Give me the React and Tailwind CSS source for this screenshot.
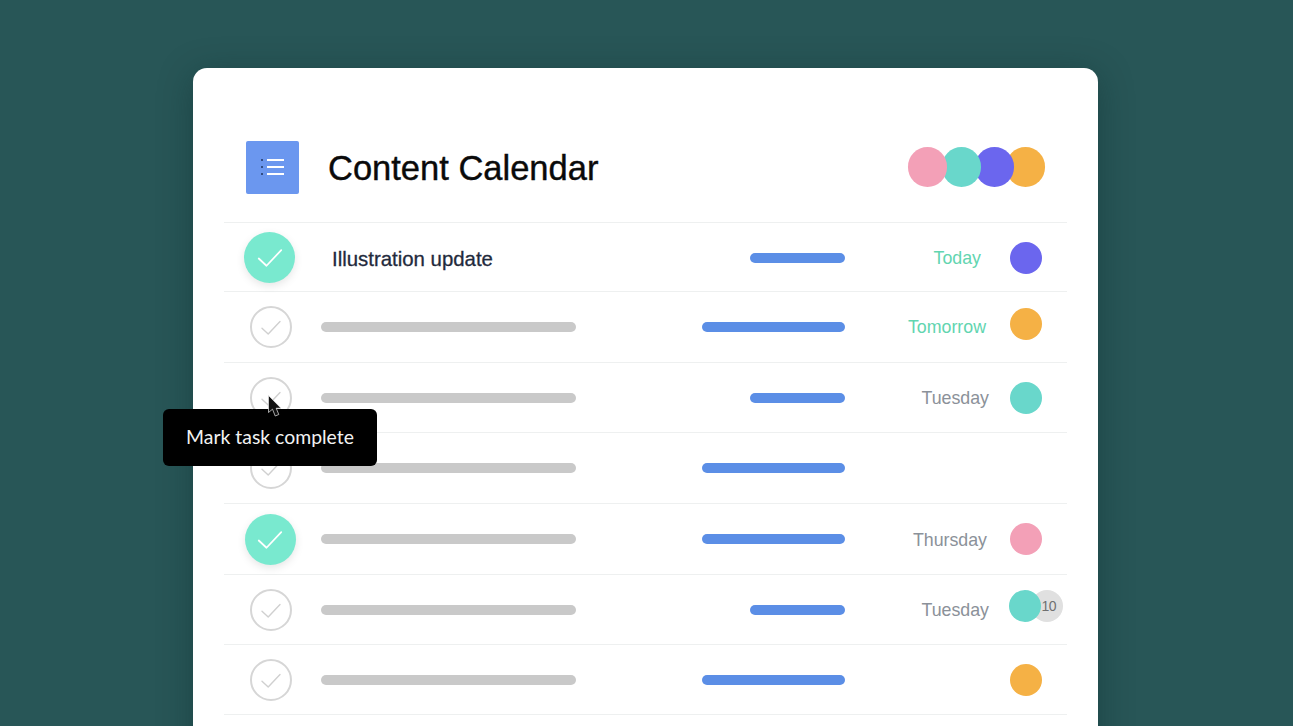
import React from 'react';

const Check = ({ className }) => (
  <svg viewBox="0 0 24 24" fill="none" strokeLinecap="round" strokeLinejoin="round" className={className}>
    <path d="M3 13.2 L9.2 19 L21 6.5" stroke="currentColor" strokeWidth="1.4" />
  </svg>
);

const rows = [
  { h: 'h-[69px]', done: true, title: 'Illustration update', blue: 'w-[95px] mt-[2px]', date: 'Today', dateCls: 'text-[#62d5b0] pr-[29px] mt-[3px]', dot: 'bg-[#6b66ee] mt-[2px]' },
  { h: 'h-[71px]', blue: 'w-[143px]', date: 'Tomorrow', dateCls: 'text-[#62d5b0] pr-[24px] mt-[2px]', dot: 'bg-[#f5b145] mb-[7px]' },
  { h: 'h-[70px]', blue: 'w-[95px]', date: 'Tuesday', dateCls: 'text-[#8b9199] pr-[21px] mt-[2px]', dot: 'bg-[#69d7cb]' },
  { h: 'h-[71px]', blue: 'w-[143px]' },
  { h: 'h-[71px]', done: true, blue: 'w-[143px]', date: 'Thursday', dateCls: 'text-[#8b9199] pr-[23px] mt-[4px]', dot: 'bg-[#f3a0b7]' },
  { h: 'h-[70px]', blue: 'w-[95px]', date: 'Tuesday', dateCls: 'text-[#8b9199] pr-[21px] mt-[2px]', dot: 'bg-[#69d7cb] mb-[7px] -ml-[1px]', extra: '10' },
  { h: 'h-[70px]', blue: 'w-[143px]', dot: 'bg-[#f5b145]' },
];

const Row = ({ row, index }) => (
  <div className={`${row.h} flex items-center border-b border-[#eef0f0]`}>
    <div className="w-[94px] flex justify-center shrink-0">
      {row.done ? (
        <div className={`w-[51px] h-[51px] rounded-full bg-[#79e9cf] shadow-[0_3px_8px_rgba(0,0,0,0.1)] flex items-center justify-center text-white shrink-0 ${index === 0 ? 'mr-[3px]' : 'mr-[2px]'}`}>
          <Check className="w-[30px] h-[30px]" />
        </div>
      ) : (
        <div className="w-[42px] h-[42px] rounded-full border-2 border-[#d6d6d6] flex items-center justify-center text-[#d0d0d0] shrink-0">
          <Check className="w-[24px] h-[24px]" />
        </div>
      )}
    </div>
    {row.title ? (
      <div className="ml-[14px] mt-[5px] text-[20.4px] text-[#1f2a3c] [-webkit-text-stroke:0.3px_#1f2a3c]">{row.title}</div>
    ) : (
      <div className="ml-[3px] w-[255px] h-[10px] rounded-full bg-[#c9c9c9]" />
    )}
    <div className="flex-1 flex justify-end">
      <div className={`${row.blue} h-[10px] rounded-full bg-[#5b8ee6]`} />
    </div>
    <div className={`w-[165px] text-right text-[17.8px] leading-none ${row.dateCls || ''}`}>{row.date}</div>
    <div className="w-[57px] shrink-0 flex items-center">
      {row.dot && <div className={`w-[32px] h-[32px] rounded-full relative z-10 shrink-0 ${row.dot}`} />}
      {row.extra && (
        <div className="w-[32px] h-[32px] -ml-[10px] mb-[7px] shrink-0 rounded-full bg-[#e0e0e0] text-[#707070] text-[14px] tracking-[-0.5px] flex items-center justify-end pr-[7px]">
          {row.extra}
        </div>
      )}
    </div>
  </div>
);

export default function App() {
  return (
    <div className="relative h-[726px] overflow-hidden bg-[#285657] font-['Liberation_Sans',sans-serif]">
      <div className="ml-[193px] mt-[68px] w-[905px] h-[700px] absolute top-0 left-0 rounded-t-[14px] bg-white shadow-[0_6px_34px_rgba(10,40,40,0.4)] px-[31px]">
        <div className="h-[154px] flex items-center pl-[22px] pr-[22px] pt-[45px]">
          <div className="w-[53px] h-[53px] rounded-[2px] bg-[#6b97ef] flex items-center justify-center shrink-0">
            <svg viewBox="0 0 26 20" className="w-[26px] h-[20px] mb-[1px]">
              <circle cx="2" cy="3" r="1" fill="#1f3560" />
              <circle cx="2" cy="10" r="1" fill="#1f3560" />
              <circle cx="2" cy="17" r="1" fill="#1f3560" />
              <path d="M7 3H24M7 10H24M7 17H24" stroke="#fff" strokeWidth="1.8" />
            </svg>
          </div>
          <h1 className="ml-[29px] mt-[2px] text-[34.5px] text-[#0a0a0a] [-webkit-text-stroke:0.4px_#0a0a0a]">Content Calendar</h1>
          <div className="ml-auto mb-[2px] flex">
            <div className="w-[39px] h-[40px] rounded-full bg-[#f3a0b7] relative z-30" />
            <div className="w-[39px] h-[40px] rounded-full bg-[#69d7cb] -ml-[5px] relative z-20" />
            <div className="w-[39px] h-[40px] rounded-full bg-[#6b66ee] -ml-[6px] relative z-10" />
            <div className="w-[39px] h-[40px] rounded-full bg-[#f5b145] -ml-[8px]" />
          </div>
        </div>
        <div className="border-t border-[#eef0f0]">
          {rows.map((row, i) => (
            <Row key={i} row={row} index={i} />
          ))}
        </div>
      </div>

      <div className="absolute left-[163px] top-[409px] w-[214px] h-[57px] pb-[2px] rounded-[6px] bg-black text-[#f2f2f2] text-[19.4px] font-['Lato',sans-serif] flex items-center justify-center">
        Mark task complete
      </div>
      <svg viewBox="0 0 14 24" className="absolute left-[267px] top-[394px] w-[14px] h-[24px]">
        <path d="M1.5 1.5V18.5L5.5 15.2L8.2 22L11.8 20.5L9.2 14.2H14Z" fill="#111" stroke="#e8e8e8" strokeWidth="0.7" strokeLinejoin="round" />
      </svg>
    </div>
  );
}
